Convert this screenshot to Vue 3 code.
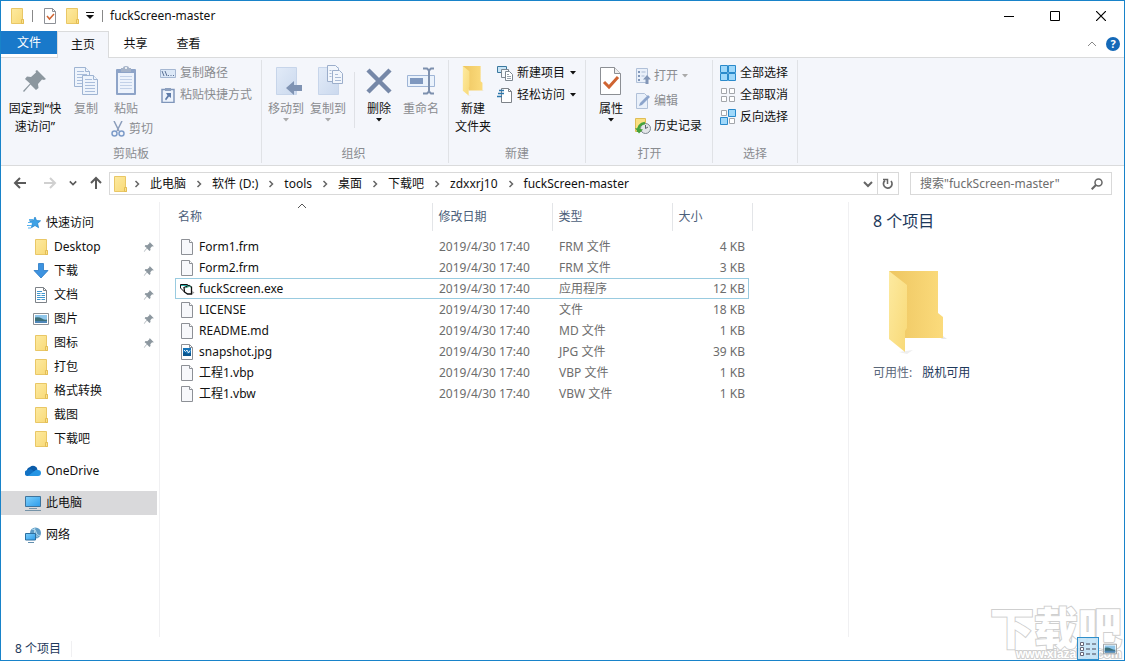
<script setup>
import { ref } from 'vue'

const tabs = ['主页', '共享', '查看']
const crumbs = ['此电脑', '软件 (D:)', 'tools', '桌面', '下载吧', 'zdxxrj10', 'fuckScreen-master']

const quick = [
  { name: 'Desktop', icon: 'folder', pinned: true },
  { name: '下载', icon: 'download', pinned: true },
  { name: '文档', icon: 'document', pinned: true },
  { name: '图片', icon: 'picture', pinned: true },
  { name: '图标', icon: 'folder', pinned: true },
  { name: '打包', icon: 'folder' },
  { name: '格式转换', icon: 'folder' },
  { name: '截图', icon: 'folder' },
  { name: '下载吧', icon: 'folder' },
]
const roots = [
  { name: 'OneDrive', icon: 'cloud' },
  { name: '此电脑', icon: 'pc', current: true },
  { name: '网络', icon: 'network' },
]

const date = '2019/4/30 17:40'
const files = [
  { name: 'Form1.frm', type: 'FRM 文件', size: '4 KB', icon: 'file' },
  { name: 'Form2.frm', type: 'FRM 文件', size: '3 KB', icon: 'file' },
  { name: 'fuckScreen.exe', type: '应用程序', size: '12 KB', icon: 'exe', focused: true },
  { name: 'LICENSE', type: '文件', size: '18 KB', icon: 'file' },
  { name: 'README.md', type: 'MD 文件', size: '1 KB', icon: 'file' },
  { name: 'snapshot.jpg', type: 'JPG 文件', size: '39 KB', icon: 'image' },
  { name: '工程1.vbp', type: 'VBP 文件', size: '1 KB', icon: 'file' },
  { name: '工程1.vbw', type: 'VBW 文件', size: '1 KB', icon: 'file' },
]
const query = ref('')
</script>

<template>
  <svg class="sprite" aria-hidden="true">
    <defs>
      <linearGradient id="gFold" x1="0" y1="0" x2="1" y2="1">
        <stop offset="0" stop-color="#fdeaa0" /><stop offset="1" stop-color="#f8d977" />
      </linearGradient>
      <linearGradient id="gBack" x1="0" y1="0" x2="1" y2="0">
        <stop offset="0" stop-color="#eec661" /><stop offset="1" stop-color="#fbdb7c" />
      </linearGradient>
      <linearGradient id="gScreen" x1="0" y1="0" x2="1" y2="1">
        <stop offset="0" stop-color="#7fd0fb" /><stop offset="1" stop-color="#2b9bea" />
      </linearGradient>
      <linearGradient id="gPale" x1="0" y1="0" x2="1" y2="1">
        <stop offset="0" stop-color="#e2ebf8" /><stop offset="1" stop-color="#cbd9ee" />
      </linearGradient>
    </defs>
    <symbol id="folder" viewBox="0 0 16 16">
      <path d="M2.500.5h11v10.500l1 1v3.500h-12z" fill="url(#gFold)" stroke="#e9c766" />
      <path d="M12.500 15.500v-4h2v4z" fill="#fbe28d" stroke="#e3bd55" />
    </symbol>
    <symbol id="file" viewBox="0 0 16 16">
      <path d="M2.500.5h8l3 3v12h-11z" fill="#f7f8fb" stroke="#8d9096" />
      <path d="M10.500.5v3h3" fill="#fff" stroke="#8d9096" />
    </symbol>
    <symbol id="image" viewBox="0 0 16 16">
      <path d="M2.500.5h8l3 3v12h-11z" fill="#fff" stroke="#8d9096" />
      <path d="M10.500.5v3h3" fill="none" stroke="#8d9096" />
      <path d="M4 4h8v8H4z" fill="#1673b8" />
      <path d="M4 9l2-1 2 2 4-1v3H4z" fill="#0b568e" />
      <path d="M5 6l1.500 1.500L8 6l1.500 3L11 6.500" fill="none" stroke="#e8f4fb" />
    </symbol>
    <symbol id="exe" viewBox="0 0 16 16">
      <path d="M1.500 3.500h7l1 1.500v6h-4l-4-4z" fill="#fff" stroke="#111" />
      <path d="M2 4.500h7" stroke="#29b7b0" />
      <path d="M5 6.500l5-2 2.500 1.500v7h-4l-3-2z" fill="#fff" stroke="#111" stroke-width="1.300" />
      <path d="M6.500 6.800l4-1.500 1.500 1" fill="none" stroke="#35a884" />
      <path d="M13 10l2.500 1.500L13 13.500z" fill="#999" />
    </symbol>
    <symbol id="star" viewBox="0 0 16 16">
      <path d="M9 2l1.600 3.600 4 .2-3 2.700 1 4.200-3.600-2.200-3.600 2.200 1-4.200-3-2.700 4-.2z" fill="#3ea2e6" stroke="#1b7fca" stroke-width=".7" />
      <path d="M2 7.500h4M1 10.500h5M2 13h3M3 4.500h4" stroke="#58b2ee" />
    </symbol>
    <symbol id="download" viewBox="0 0 16 16">
      <path d="M5.500.5h5v7h4.500L8 15 1 7.500h4.500z" fill="#3d93e0" stroke="#2878c4" stroke-width=".8" />
    </symbol>
    <symbol id="document" viewBox="0 0 16 16">
      <path d="M2.500.5h8l3 3v12h-11z" fill="#fff" stroke="#7d8288" />
      <path d="M10.500.5v3h3" fill="none" stroke="#7d8288" />
      <path d="M4 4.500h5M4 6.500h3.500M8.500 6.500H12M4 8.500h3.500M8.500 8.500H12M4 10.500h8M4 12.500h3.500M8.500 12.500H12" stroke="#3f97cf" />
    </symbol>
    <symbol id="picture" viewBox="0 0 16 16">
      <path d="M.5 2.500h15v11H.5z" fill="#fff" stroke="#8c9095" />
      <path d="M2 4h12v8H2z" fill="#8fc6ea" /><path d="M2 6.500q4-1 7 1t5 1V12H2z" fill="#3c6f78" />
      <path d="M2 10h12v2H2z" fill="#4f87b9" />
    </symbol>
    <symbol id="cloud" viewBox="0 0 16 16">
      <path d="M2 9a4 4 0 0 1 3-5 4.500 4.500 0 0 1 7.500 2.500L9 10z" fill="#0a5ba9" />
      <path d="M3 13a3 3 0 0 1-.5-6 4 4 0 0 1 4-.5L13 11z" fill="#1272c4" />
      <path d="M3 13l7-5.500a3 3 0 0 1 3-.5 3 3 0 0 1 0 6z" fill="#2595e4" />
    </symbol>
    <symbol id="pc" viewBox="0 0 16 16">
      <path d="M.5 1.500h15v10H.5z" fill="url(#gScreen)" stroke="#3e749d" />
      <path d="M4 13.500h8" stroke="#7593a8" /><path d="M0 15.500h16" stroke="#7593a8" />
    </symbol>
    <symbol id="network" viewBox="0 0 16 16">
      <circle cx="10.500" cy="6" r="5.500" fill="#5e9cc6" />
      <path d="M7 2q4 0 4 3t4 4M10 .5q-2 6 3 10" fill="none" stroke="#b8dcee" />
      <path d="M.5 6.500h10v6.500H.5z" fill="url(#gScreen)" stroke="#2d6f9f" />
      <path d="M3 15.500h6" stroke="#638fae" />
    </symbol>
    <symbol id="pin" viewBox="0 0 32 32">
      <path d="M18 5l9 9-2 1-2-.5-4 4.500.5 4-2.500 2-5.500-5.500L5 27l-1-1 7-7.500L6 14l2-2.500 4 .5 5-4.500L16.500 6z" fill="#8c979f" />
    </symbol>
    <symbol id="copy" viewBox="0 0 32 32">
      <g fill="#eef4fc" stroke="#9fb4d2">
        <path d="M4.500 2.500h11l4 4v15h-15z" /><path d="M15.500 2.500v4h4" />
        <path d="M12.500 10.500h11l4 4v15h-15z" /><path d="M23.500 10.500v4h4" />
      </g>
      <path d="M7 6.500h7M7 9.500h10M7 12.500h5M7 15.500h5M7 18.500h5M15 14.500h7M15 17.500h10M15 20.500h10M15 23.500h10M15 26.500h10" stroke="#a9bddb" />
    </symbol>
    <symbol id="paste" viewBox="0 0 32 32">
      <rect x="6" y="4" width="20" height="26" rx="1" fill="#8ea4c8" />
      <path d="M8 8h16v20H8z" fill="#edf3fc" />
      <path d="M11 3h2q0-2 3-2t3 2h2v4H11z" fill="#a4b2c8" /><circle cx="16" cy="3" r="1" fill="#fff" />
      <path d="M10 11.500h12M10 14.500h12M10 17.500h12M10 20.500h12M10 23.500h12" stroke="#c2d1e8" />
    </symbol>
    <symbol id="cut" viewBox="0 0 16 16">
      <path d="M4 0l5 10M12 0L7 10" stroke="#8b9dbb" stroke-width="1.500" />
      <g fill="none" stroke="#7e9cc9" stroke-width="1.500"><circle cx="4.500" cy="12.500" r="2.500" /><circle cx="11.500" cy="12.500" r="2.500" /></g>
    </symbol>
    <symbol id="path" viewBox="0 0 16 16">
      <path d="M.5 4.500h15v8H.5z" fill="#dce8f7" stroke="#a5b7d2" />
      <path d="M2 6l2 5M5 6l2 5M8 10.500h1M10.500 10.500h1M13 10.500h1" fill="none" stroke="#5b7195" />
    </symbol>
    <symbol id="shortcut" viewBox="0 0 16 16">
      <path d="M2 2.500h12v13H2z" fill="#edf3fc" stroke="#8096ba" stroke-width="1.500" />
      <path d="M5 1h6v3H5z" fill="#8da0bf" /><path d="M6 6h5v5l-2-1.500-3 4L5 12l2.500-3.500z" fill="#5f7ca9" />
    </symbol>
    <symbol id="moveto" viewBox="0 0 32 32">
      <path d="M6.500 2.500h20v27h-20z" fill="url(#gPale)" stroke="#c7d5ea" />
      <path d="M16 23l8-7v4h8v6h-8v4z" fill="#7f93b3" />
    </symbol>
    <symbol id="copyto" viewBox="0 0 32 32">
      <path d="M6.500 2.500h20v27h-20z" fill="url(#gPale)" stroke="#c7d5ea" />
      <g fill="#f2f6fc" stroke="#9caecb"><path d="M15.500.5h8l3 3v13h-11z" /><path d="M20.500 5.500h7l3 3v10h-10z" /></g>
      <path d="M17.500 5.500h2M17.500 8.500h2M17.500 11.500h2M23 9.500h3M23 12.500h6M23 15.500h6" stroke="#a9bad5" />
    </symbol>
    <symbol id="delete" viewBox="0 0 32 32">
      <path d="M5 5l22 22M27 5L5 27" stroke="#7688a8" stroke-width="4.500" />
    </symbol>
    <symbol id="rename" viewBox="0 0 32 32">
      <path d="M2.500 10.500h27v11h-27z" fill="#eaf2fc" stroke="#9fb5d6" />
      <path d="M5 13h13v6H5z" fill="#7f98bf" />
      <path d="M18 3.500h4l2 2 2-2h3M24 5v22M18 28.500h4l2-2 2 2h3" fill="none" stroke="#7d90ae" stroke-width="2" />
    </symbol>
    <symbol id="bigfolder" viewBox="0 0 64 88">
      <path d="M14 84l14-2-6 4z" fill="#eee" /><path d="M56 71h6l-4-3z" fill="#e8e8e8" />
      <path d="M4 3h49v42l5 4v21H20z" fill="url(#gBack)" />
      <path d="M4 3l18 14v43l-2 3v21L4 71z" fill="url(#gFold)" />
    </symbol>
    <symbol id="newitem" viewBox="0 0 16 16">
      <path d="M.5 1.500h9v6h-9z" fill="#c9e5f6" stroke="#3b789f" />
      <path d="M4.500 4.500h7v8h-7z" fill="#f5f8fb" stroke="#7d8790" />
      <path d="M8.500 6.500h4l3 3v6h-7z" fill="#fff" stroke="#7d8790" />
      <path d="M10 9.500h2M10 11.500h4M10 13.500h4" stroke="#9aa4ad" />
    </symbol>
    <symbol id="easy" viewBox="0 0 16 16">
      <path d="M4.500 1.500h7l3 3v11h-10z" fill="#fff" stroke="#7d8288" /><path d="M11.500 1.500v3h3" fill="none" stroke="#7d8288" />
      <path d="M2 3.500h5M1 6.500h6M0 9.500h5" stroke="#2d78ab" stroke-width="1.500" />
    </symbol>
    <symbol id="props" viewBox="0 0 32 32">
      <path d="M5.500 2.500h14l6 6v21h-20z" fill="#fff" stroke="#8c8f94" /><path d="M19.500 2.500v6h6" fill="#eee" stroke="#8c8f94" />
      <path d="M9 17l5 5 9-10" fill="none" stroke="#cf6432" stroke-width="3" />
    </symbol>
    <symbol id="open" viewBox="0 0 16 16">
      <path d="M1.500.5h11v14h-11z" fill="#e9f0fa" stroke="#b0c0d8" />
      <path d="M3 3h2v2H3zM3 7h2v2H3zM3 11h2v2H3z" fill="#8298bb" /><path d="M6.500 4h4M6.500 8h3" stroke="#a9b9d2" />
      <path d="M12 7l4 4.500h-2.500V16h-3v-4.500H8z" fill="#8296b7" />
    </symbol>
    <symbol id="edit" viewBox="0 0 16 16">
      <path d="M1.500.5h8l3 3v12h-11z" fill="#e9f0fa" stroke="#b0c0d8" />
      <path d="M4 13l1-3 8-8 2 2-8 8z" fill="#8ca4cb" />
    </symbol>
    <symbol id="history" viewBox="0 0 16 16">
      <path d="M.5.5h10v13H.5z" fill="#fbe082" stroke="#dfbd55" />
      <circle cx="10.500" cy="10.500" r="5" fill="#e3e6e8" stroke="#7d8790" />
      <path d="M10.500 7v3.500l2.500-1.500" fill="none" stroke="#59636b" />
      <path d="M3 14q0-8 7-9" fill="none" stroke="#45a33b" stroke-width="2.500" /><path d="M0 10l4 5.500 4-4z" fill="#45a33b" />
    </symbol>
    <symbol id="selall" viewBox="0 0 16 16">
      <path d="M.5.5h7v7h-7zM8.500.5h7v7h-7zM.5 8.500h7v7h-7zM8.500 8.500h7v7h-7z" fill="#9fd8fa" stroke="#2a8acb" />
    </symbol>
    <symbol id="selnone" viewBox="0 0 16 16">
      <path d="M1.500 1.500h5v5h-5zM9.500 1.500h5v5h-5zM1.500 9.500h5v5h-5zM9.500 9.500h5v5h-5z" fill="#fff" stroke="#a3a6ab" />
    </symbol>
    <symbol id="selinv" viewBox="0 0 16 16">
      <path d="M1.500 1.500h5v5h-5zM9.500 9.500h5v5h-5z" fill="#fff" stroke="#a3a6ab" />
      <path d="M8.500.5h7v7h-7zM.5 8.500h7v7h-7z" fill="#9fd8fa" stroke="#2a8acb" />
    </symbol>
    <symbol id="check" viewBox="0 0 16 16">
      <path d="M2.500.5h8l3 3v12h-11z" fill="#fff" stroke="#8d9096" /><path d="M10.500.5v3h3" fill="none" stroke="#8d9096" />
      <path d="M5 8l2.500 3L12 6" fill="none" stroke="#cf6432" stroke-width="1.500" />
    </symbol>
    <symbol id="caret" viewBox="0 0 6 4"><path d="M0 0h6L3 3.500z" fill="currentColor" /></symbol>
    <symbol id="chev" viewBox="0 0 8 8"><path d="M2.500 1l3 3-3 3" fill="none" stroke="currentColor" stroke-width="1.500" /></symbol>
    <symbol id="down" viewBox="0 0 10 10"><path d="M1 3l4 4 4-4" fill="none" stroke="currentColor" stroke-width="2" /></symbol>
    <symbol id="up" viewBox="0 0 10 10"><path d="M1 7l4-4 4 4" fill="none" stroke="currentColor" /></symbol>
    <symbol id="arrow" viewBox="0 0 14 14"><path d="M13 7H2M7 2L2 7l5 5" fill="none" stroke="currentColor" stroke-width="2" /></symbol>
    <symbol id="forward" viewBox="0 0 14 14"><path d="M1 7h11M7 2l5 5-5 5" fill="none" stroke="currentColor" stroke-width="2" /></symbol>
    <symbol id="uparrow" viewBox="0 0 14 14"><path d="M7 13V2M2 7l5-5 5 5" fill="none" stroke="currentColor" stroke-width="2" /></symbol>
  </svg>

  <div class="window">
    <header class="titlebar">
      <svg class="i16"><use href="#folder" /></svg>
      <span class="bar"></span>
      <button class="qat" aria-label="属性"><svg class="i16"><use href="#check" /></svg></button>
      <button class="qat" aria-label="新建文件夹"><svg class="i16"><use href="#folder" /></svg></button>
      <button class="qat more" aria-label="自定义快速访问工具栏">
        <svg width="8" height="8" viewBox="0 0 8 8"><path d="M0 .5h8" stroke="#111" /><path d="M0 3h8L4 7z" fill="#111" /></svg>
      </button>
      <span class="bar near"></span>
      <h1>fuckScreen-master</h1>
      <div class="controls">
        <button aria-label="最小化"><svg width="10" height="10"><path d="M0 5.500h10" stroke="#000" /></svg></button>
        <button aria-label="最大化"><svg width="10" height="10"><path d="M.5.5h9v9h-9z" fill="none" stroke="#000" /></svg></button>
        <button aria-label="关闭"><svg width="10" height="10"><path d="M0 0l10 10M10 0L0 10" stroke="#000" stroke-width="1.200" /></svg></button>
      </div>
    </header>

    <nav class="tabs">
      <button class="tab filetab">文件</button>
      <button v-for="(t, i) in tabs" :key="t" class="tab" :class="{ active: i === 0 }">{{ t }}</button>
      <div class="help">
        <button aria-label="最小化功能区"><svg width="10" height="10"><use href="#up" /></svg></button>
        <button class="question" aria-label="帮助">?</button>
      </div>
    </nav>

    <section class="ribbon">
      <div class="group g1">
        <div class="tools">
          <button class="big pinbtn"><svg><use href="#pin" /></svg><span>固定到“快<br />速访问”</span></button>
          <button class="big off copybtn"><svg><use href="#copy" /></svg><span>复制</span></button>
          <div class="stack paste">
            <button class="big off"><svg><use href="#paste" /></svg><span>粘贴</span></button>
            <button class="small off"><svg class="i16"><use href="#cut" /></svg>剪切</button>
          </div>
          <div class="stack rows">
            <button class="small off"><svg class="i16"><use href="#path" /></svg>复制路径</button>
            <button class="small off"><svg class="i16"><use href="#shortcut" /></svg>粘贴快捷方式</button>
          </div>
        </div>
        <h2>剪贴板</h2>
      </div>
      <div class="group g2">
        <div class="tools">
          <button class="big off"><svg><use href="#moveto" /></svg><span>移动到</span><svg class="caret"><use href="#caret" /></svg></button>
          <button class="big off"><svg><use href="#copyto" /></svg><span>复制到</span><svg class="caret"><use href="#caret" /></svg></button>
          <span class="split"></span>
          <button class="big"><svg><use href="#delete" /></svg><span>删除</span><svg class="caret"><use href="#caret" /></svg></button>
          <button class="big off"><svg><use href="#rename" /></svg><span>重命名</span></button>
        </div>
        <h2>组织</h2>
      </div>
      <div class="group g3">
        <div class="tools">
          <button class="big"><svg><use href="#bigfolder" /></svg><span>新建<br />文件夹</span></button>
          <div class="stack rows">
            <button class="small"><svg class="i16"><use href="#newitem" /></svg>新建项目<svg class="caret"><use href="#caret" /></svg></button>
            <button class="small"><svg class="i16"><use href="#easy" /></svg>轻松访问<svg class="caret"><use href="#caret" /></svg></button>
          </div>
        </div>
        <h2>新建</h2>
      </div>
      <div class="group g4">
        <div class="tools">
          <button class="big"><svg><use href="#props" /></svg><span>属性</span><svg class="caret"><use href="#caret" /></svg></button>
          <div class="stack rows tall">
            <button class="small off"><svg class="i16"><use href="#open" /></svg>打开<svg class="caret"><use href="#caret" /></svg></button>
            <button class="small off"><svg class="i16"><use href="#edit" /></svg>编辑</button>
            <button class="small"><svg class="i16"><use href="#history" /></svg>历史记录</button>
          </div>
        </div>
        <h2>打开</h2>
      </div>
      <div class="group g5">
        <div class="tools">
          <div class="stack rows">
            <button class="small"><svg class="i16"><use href="#selall" /></svg>全部选择</button>
            <button class="small"><svg class="i16"><use href="#selnone" /></svg>全部取消</button>
            <button class="small"><svg class="i16"><use href="#selinv" /></svg>反向选择</button>
          </div>
        </div>
        <h2>选择</h2>
      </div>
    </section>

    <div class="navrow">
      <div class="arrows">
        <button aria-label="返回"><svg><use href="#arrow" /></svg></button>
        <button class="dim" aria-label="前进"><svg><use href="#forward" /></svg></button>
        <button class="recent" aria-label="最近浏览的位置"><svg><use href="#down" /></svg></button>
        <button aria-label="上移"><svg><use href="#uparrow" /></svg></button>
      </div>
      <div class="address">
        <svg class="i16"><use href="#folder" /></svg>
        <template v-for="c in crumbs" :key="c">
          <svg class="sep"><use href="#chev" /></svg><a href="#">{{ c }}</a>
        </template>
        <button class="drop" aria-label="以前的位置"><svg width="10" height="10"><use href="#down" /></svg></button>
        <button class="refresh" aria-label="刷新">
          <svg width="12" height="12" viewBox="0 0 12 12"><path d="M3 2.500A4.300 4.300 0 1 0 9 3" fill="none" stroke="#666" stroke-width="1.700" /><path d="M1 1.500h4.500V6" fill="none" stroke="#666" stroke-width="1.500" /></svg>
        </button>
      </div>
      <label class="search">
        <input v-model="query" type="text" aria-label="搜索" placeholder='搜索"fuckScreen-master"' />
        <svg width="12" height="12" viewBox="0 0 12 12"><circle cx="7.500" cy="4.500" r="3.500" fill="none" stroke="#666" stroke-width="1.500" /><path d="M5 7L.7 11.300" stroke="#666" stroke-width="2" /></svg>
      </label>
    </div>

    <main class="body">
      <nav class="tree">
        <a href="#" class="node root"><svg class="i16"><use href="#star" /></svg>快速访问</a>
        <a v-for="q in quick" :key="q.name" href="#" class="node child">
          <svg class="i16"><use :href="'#' + q.icon" /></svg>{{ q.name }}
          <svg v-if="q.pinned" class="pin"><use href="#pin" /></svg>
        </a>
        <a v-for="r in roots" :key="r.name" href="#" class="node top" :class="{ current: r.current }">
          <svg class="i16"><use :href="'#' + r.icon" /></svg>{{ r.name }}
        </a>
      </nav>

      <section class="list">
        <table>
          <thead>
            <tr>
              <th class="c1">名称<svg class="sort"><use href="#up" /></svg></th>
              <th class="c2">修改日期</th><th class="c2">类型</th><th class="c3">大小</th>
            </tr>
          </thead>
          <tbody>
            <tr v-for="f in files" :key="f.name" :class="{ focused: f.focused }">
              <td class="name"><div><svg class="i16"><use :href="'#' + f.icon" /></svg>{{ f.name }}</div></td>
              <td>{{ date }}</td><td>{{ f.type }}</td><td class="size">{{ f.size }}</td>
            </tr>
          </tbody>
        </table>
      </section>

      <aside class="details">
        <h3>8 个项目</h3>
        <svg class="preview"><use href="#bigfolder" /></svg>
        <dl><dt>可用性:</dt><dd>脱机可用</dd></dl>
      </aside>
    </main>

    <footer class="status">
      <span class="count">8 个项目</span>
      <div class="views">
        <button class="on" aria-label="详细信息">
          <svg width="16" height="16" viewBox="0 0 16 16"><path d="M.5 1.500h3v3h-3zM.5 6.500h3v3h-3zM.5 11.500h3v3h-3z" fill="#fff" stroke="#667" /><path d="M6 3h4M12 3h4M6 8h4M12 8h4M6 13h4M12 13h4" stroke="#445" /></svg>
        </button>
        <button aria-label="大图标"><svg width="14" height="14"><use href="#picture" /></svg></button>
      </div>
    </footer>

    <div class="watermark"><b>下载吧</b><span>www.xiazaiba.com</span></div>
  </div>
</template>

<style>
body { background: #fff; }
</style>

<style scoped>
.sprite { position: absolute; width: 0; height: 0; }
.window {
  position: relative;
  display: flex;
  flex-direction: column;
  box-sizing: border-box;
  min-height: 100vh;
  border: 1px solid #1883c9;
  background: #fff;
  color: #111;
  font: 12px/18px "Noto Sans", "Noto Sans CJK SC", sans-serif;
}
button { display: flex; align-items: center; justify-content: center; margin: 0; padding: 0; border: 0; background: none; color: inherit; font: inherit; white-space: nowrap; }
a { color: inherit; text-decoration: none; white-space: nowrap; }
h1, h2, h3, dl, dd { margin: 0; font: inherit; }
svg { flex: none; display: block; }
.i16 { width: 16px; height: 16px; }

.titlebar { display: flex; align-items: center; height: 30px; padding-left: 8px; }
.bar { width: 1px; height: 12px; margin: 0 9px 0 7px; background: #888; }
.bar.near { margin: 0 7px 0 8px; }
.qat { margin-right: 6px; }
.qat.more { margin: 0; }
.controls { display: flex; align-self: stretch; margin-left: auto; }
.controls button { width: 46px; }

.tabs { display: flex; height: 27px; border-bottom: 1px solid #dadbdc; box-sizing: border-box; }
.tab { width: 53px; height: 25px; }
.filetab { width: 56px; height: 23px; background: #1979ca; color: #fff; }
.tab.active { width: 52px; height: 27px; border: 1px solid #dadbdc; border-bottom: 0; background: #f4f6fb; }
.help { display: flex; align-items: center; gap: 9px; margin-left: auto; padding-right: 4px; color: #888; }
.question { width: 14px; height: 14px; border-radius: 50%; background: #1469b8; color: #fff; font-size: 11px; font-weight: bold; line-height: 14px; }

.ribbon { display: flex; height: 107px; border-bottom: 1px solid #dadbdc; background: #f4f6fb; }
.group { display: flex; flex-direction: column; box-sizing: border-box; margin: 2px 0; border-right: 1px solid #e0e2e6; }
.group h2 { color: #8a8c90; text-align: center; }
.tools { display: flex; flex: 1; }
.g1 { width: 261px; }
.g2 { width: 187px; padding-left: 3px; }
.g2 h2 { padding-right: 6px; }
.g3 { width: 137px; }
.g4 { width: 127px; padding-left: 1px; }
.g5 { width: 85px; }
.big { flex-direction: column; align-self: flex-start; width: 42px; padding-top: 5px; }
.big > svg:first-child { width: 32px; height: 32px; margin-bottom: 3px; }
.big .caret { margin-top: 0; }
.caret { width: 6px; height: 4px; }
.off { color: #8a8c90; }
.off .caret { color: #aaa; }
.big.pinbtn { width: 68px; }
.big.copybtn { width: 34px; }
.stack { display: flex; flex-direction: column; align-items: flex-start; }
.paste { width: 55px; padding-left: 2px; }
.paste .small { margin-left: 5px; gap: 3px; }
.small { height: 22px; gap: 4px; }
.rows { padding-top: 2px; }
.rows .caret { margin-left: 1px; }
.rows.tall { padding-top: 3px; }
.tall .small { height: 25px; gap: 3px; }
.split { width: 1px; height: 56px; margin: 12px 3px 0 5px; background: #dfe1e6; }
.g3 .big { width: 48px; }
.g4 .big { width: 48px; }
.g5 .rows { padding-left: 7px; }

.navrow { display: flex; align-items: center; height: 36px; padding-right: 12px; gap: 11px; }
.arrows { display: flex; align-items: center; width: 97px; margin-top: -2px; padding-left: 12px; box-sizing: border-box; gap: 16px; color: #5a5a5a; }
.arrows .dim { color: #d0d0d0; }
.arrows .recent { margin: 0 -4px; }
.arrows svg { width: 14px; height: 14px; }
.arrows .recent svg { width: 8px; height: 8px; }
.address { display: flex; flex: 1; align-items: center; box-sizing: border-box; height: 23px; margin-top: -1px; padding-left: 2px; border: 1px solid #d9d9d9; }
.sep { width: 8px; height: 8px; margin: 0 9px; color: #666; }
.address > .i16 + .sep { margin-left: 5px; }
.drop { width: 18px; height: 21px; margin-left: auto; color: #666; }
.refresh { width: 21px; height: 21px; border-left: 1px solid #d9d9d9; }
.search { display: flex; align-items: center; box-sizing: border-box; width: 202px; height: 23px; margin-top: -1px; padding: 0 8px 0 9px; border: 1px solid #d9d9d9; }
.search input { flex: 1; min-width: 0; padding: 0; border: 0; outline: 0; background: none; color: #111; font: inherit; }
.search input::placeholder { color: #6d6d6d; opacity: 1; }

.body { display: flex; flex: 1; }
.tree { box-sizing: border-box; width: 159px; padding: 9px 2px 0 0; border-right: 1px solid #f0f0f2; }
.node { display: flex; align-items: center; height: 24px; gap: 5px; }
.root { padding-left: 25px; gap: 4px; }
.child { padding-left: 32px; }
.top { margin-top: 8px; padding-left: 24px; }
.current { background: #d9d9db; }
.pin { width: 14px; height: 14px; margin-left: auto; margin-right: 1px; }
.list { flex: 1; padding: 1px 0 0 15px; }
table { width: 577px; table-layout: fixed; border-collapse: collapse; }
th { box-sizing: border-box; height: 28px; padding: 0 6px; border-right: 1px solid #e3e5e8; color: #4c607a; font-weight: normal; text-align: left; }
.c1 { position: relative; width: 257px; padding-left: 3px; }
.c2 { width: 120px; }
.c3 { width: 80px; }
.sort { position: absolute; top: -2px; left: 122px; width: 10px; height: 10px; color: #555; }
tbody::before { display: block; height: 5px; content: ""; }
tbody tr { position: relative; }
td { height: 21px; padding: 0 7px; color: #6d6d6d; line-height: 20px; }
td.name { padding-left: 4px; color: #111; }
td.name div { display: flex; align-items: center; gap: 4px; }
td.size { text-align: right; }
.focused::after { position: absolute; inset: 0 3px 0 0; border: 1px solid #99cbe0; content: ""; pointer-events: none; }

.details { box-sizing: border-box; width: 276px; padding: 7px 24px; border-left: 1px solid #f0f0f2; color: #1e395b; }
.details h3 { font-size: 16px; line-height: 24px; }
.preview { width: 64px; height: 88px; margin: 35px 0 0 12px; }
dl { display: flex; gap: 10px; margin-top: 8px; }
dt { color: #5a6779; }

.status { display: flex; align-items: center; height: 23px; padding: 0 3px 0 14px; color: #1e395b; }
.count { padding-right: 10px; border-right: 1px solid #f0f0f2; line-height: 16px; }
.views { position: relative; z-index: 1; display: flex; align-self: stretch; margin-left: auto; }
.views button { width: 22px; }
.views .on { box-sizing: border-box; border: 1px solid #2f8fcb; background: rgba(190, 226, 247, 0.85); }

.watermark {
  position: absolute;
  right: 2px;
  bottom: 0;
  color: #fff;
  paint-order: stroke fill;
  -webkit-text-stroke: 2px #cfcfcf;
  pointer-events: none;
}
.watermark b { display: block; font: 900 44px/44px "Noto Sans CJK SC", sans-serif; white-space: nowrap; }
.watermark span { display: block; padding-left: 26px; font: bold 12px/12px "Liberation Sans", sans-serif; }
</style>
